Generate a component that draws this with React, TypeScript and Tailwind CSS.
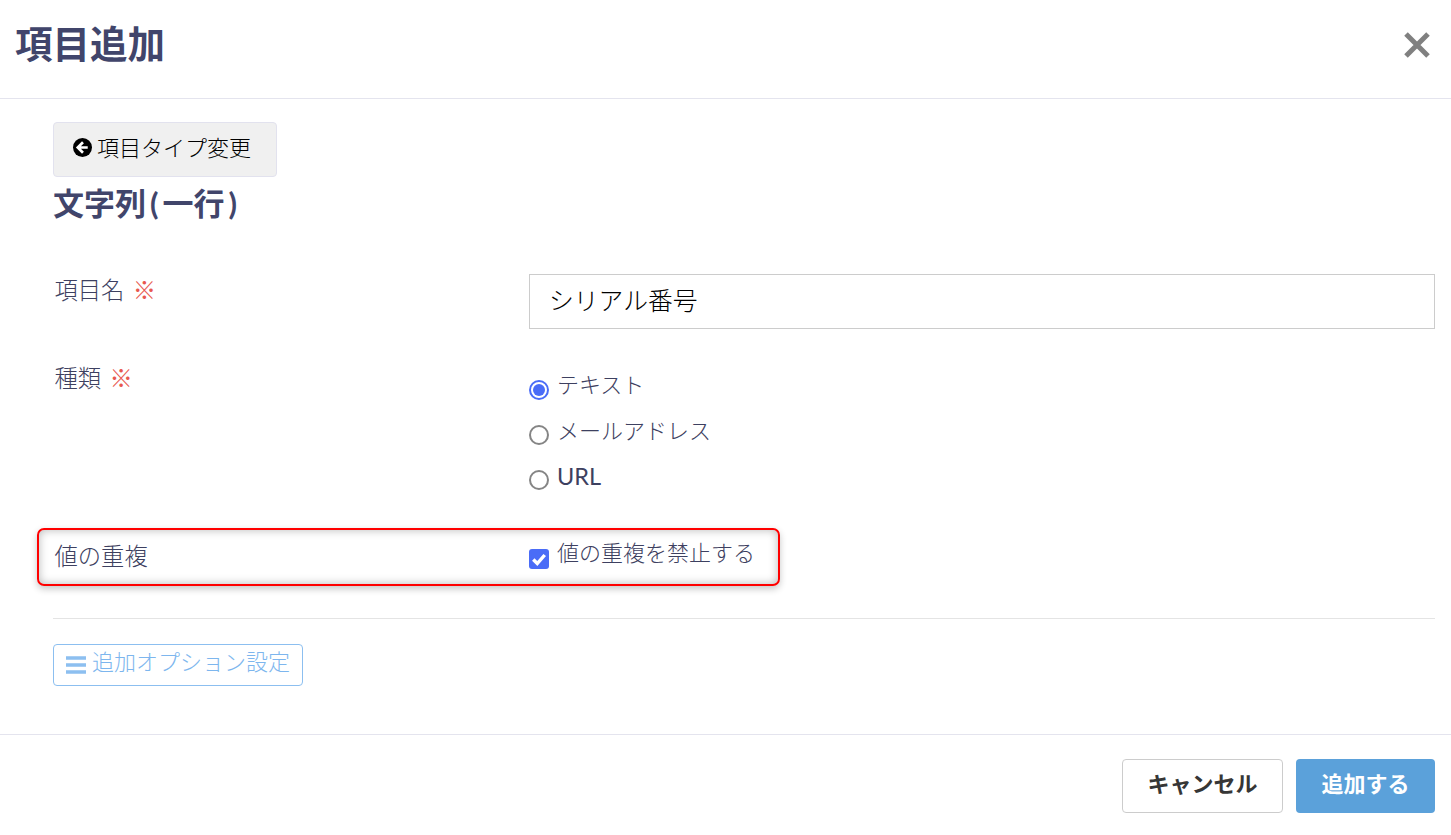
import React from "react";

const font = { fontFamily: '"Lato", "Noto Sans CJK JP", sans-serif' };

function Radio({ circle, label, text }: { circle: string; label: string; text: string }) {
  const checked = label === "テキスト";
  return (
    <div className="flex h-[46px] items-start">
      <span
        className={
          "flex h-5 w-5 shrink-0 items-center justify-center rounded-full border-2 bg-white " +
          circle +
          (checked ? " border-[#4a6cf7]" : " border-[#858585]")
        }
      >
        {checked && <span className="h-3 w-3 rounded-full bg-[#4a6cf7]" />}
      </span>
      <span className={"ml-[8px] leading-[30px] text-[#3d4060] " + text}>{label}</span>
    </div>
  );
}

export default function App() {
  return (
    <div
      className="relative flex h-[835px] w-full flex-col overflow-hidden bg-white text-[#41456b]"
      style={font}
    >
      <header className="flex h-[99px] shrink-0 items-start justify-between border-b border-[#e4e4ee] pl-[15px] pr-[19px]">
        <h1 className="mt-[17px] text-[37.5px] font-bold leading-[54px] text-[#41456b]">項目追加</h1>
        <svg className="mt-[30px]" width="30" height="30" viewBox="0 0 30 30">
          <path d="M4 4 L26 26 M26 4 L4 26" stroke="#808080" strokeWidth="5" />
        </svg>
      </header>

      <main className="flex flex-1 flex-col pl-[53px] pr-4">
        <button className="mt-[23px] flex h-[55px] w-[224px] items-center rounded-[4px] border border-[#e2e2ee] bg-[#f0f0f0] pb-[4px] pl-[19px] text-[22px] font-light text-[#000]">
          <svg width="19" height="19" viewBox="0 0 20 20" className="mr-[5px] shrink-0">
            <circle cx="10" cy="10" r="10" fill="#000" />
            <path d="M10.5 4.5 L5 10 L10.5 15.5 M5.5 10 H15.5" stroke="#fff" strokeWidth="2.8" fill="none" />
          </svg>
          項目タイプ変更
        </button>
        <h2 className="mt-[5px] text-[31px] font-bold leading-[42px] text-[#41456b]">
          文字列<span className="mx-[4px]">(</span>一行<span className="mx-[4px]">)</span>
        </h2>

        <div className="mt-[50px] flex h-[56px] items-start">
          <div className="ml-[1.5px] w-[474.5px] text-[23.3px] font-light leading-[32px] text-[#3d4060]">
            項目名 <span className="ml-[2px] text-[#e8584f]">※</span>
          </div>
          <input
            readOnly
            value="シリアル番号"
            className="h-[55px] flex-1 border border-[#cccccc] pb-[5px] pl-[19px] pr-5 text-[24.8px] font-light text-[#000] outline-none"
          />
        </div>

        <div className="mt-[32px] flex items-start">
          <div className="ml-[1.5px] w-[474.5px] text-[23.3px] font-light leading-[32px] text-[#3d4060]">
            種類 <span className="ml-[2px] text-[#e8584f]">※</span>
          </div>
          <div className="pt-[8px]">
            <Radio circle="mt-[10px]" label="テキスト" text="text-[22px] font-light" />
            <Radio circle="mt-[9px]" label="メールアドレス" text="text-[22px] font-light" />
            <Radio circle="mt-[8px]" label="URL" text="-mt-[1px] text-[23.5px] font-normal" />
          </div>
        </div>

        <div className="mt-[30px] flex items-start">
          <div className="ml-[1.5px] w-[474.5px] pt-[2px] text-[23.3px] font-light leading-[32px] text-[#3d4060]">値の重複</div>
          <div className="flex items-start">
            <span className="mt-[11px] flex h-5 w-5 items-center justify-center rounded-[3px] bg-[#4a6cf7]">
              <svg width="16" height="16" viewBox="0 0 14 14">
                <path d="M2 7.5 L5.5 11 L12 3.5" stroke="#fff" strokeWidth="3" fill="none" />
              </svg>
            </span>
            <span className="ml-[8px] text-[22px] font-light leading-[30px] text-[#3d4060]">値の重複を禁止する</span>
          </div>
        </div>

        <hr className="mt-[46px] border-0 border-t border-[#e4e4e4]" />

        <button className="mt-[25px] flex h-[42px] w-[250px] items-center rounded-[4px] border border-[#8cbff0] bg-white pl-[12px] text-[22px] font-light text-[#7db6ee]">
          <svg width="20" height="18" viewBox="0 0 20 18" className="mr-[6px] shrink-0">
            <path d="M0 2 H20 M0 9 H20 M0 16 H20" stroke="#8cbff0" strokeWidth="3.6" />
          </svg>
          <span className="-mt-[7px]">追加オプション設定</span>
        </button>
      </main>

      <footer className="flex h-[101px] shrink-0 items-start justify-end gap-[13px] border-t border-[#e4e4ee] pr-4 pt-[24px]">
        <button className="flex h-[54px] w-[161px] items-center justify-center rounded-[4px] border border-[#cccccc] bg-white pb-[5px] text-[22px] font-bold text-[#363636]">
          キャンセル
        </button>
        <button className="flex h-[54px] w-[139px] items-center justify-center rounded-[4px] bg-[#5ba1da] pb-[5px] text-[22px] font-bold text-white">
          追加する
        </button>
      </footer>

      {/* red annotation laid over the screenshot */}
      <div className="pointer-events-none absolute left-[37px] top-[528px] h-[58px] w-[743px] rounded-[7px] border-2 border-[#ff0000] shadow-[0_3px_7px_rgba(0,0,0,0.22),inset_0_0_10px_rgba(0,0,0,0.28)]" />
    </div>
  );
}
